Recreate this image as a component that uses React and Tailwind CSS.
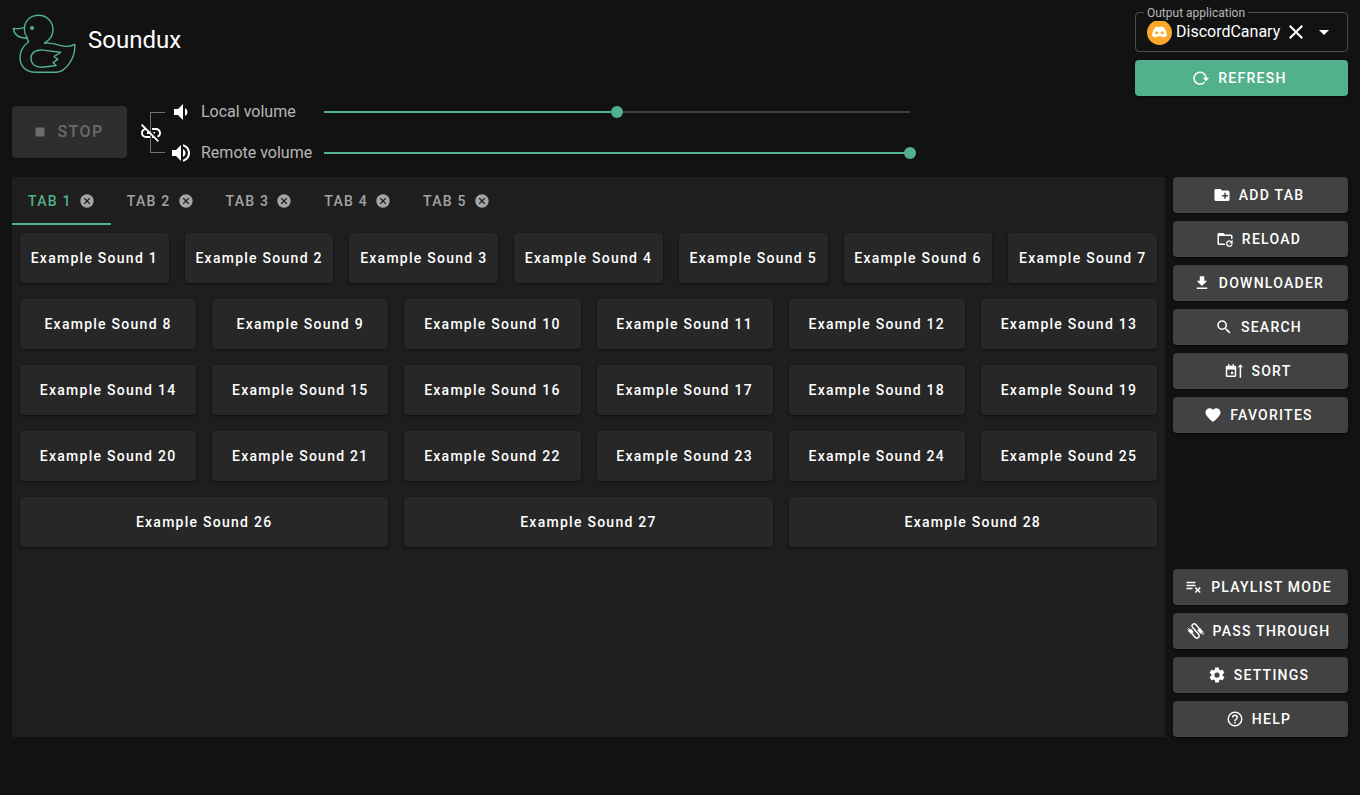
import { useState } from "react";

const icons = {
  stop: "M18,18H6V6H18V18Z",
  volumeMedium:
    "M5,9V15H9L14,20V4L9,9M18.5,12C18.5,10.23 17.5,8.71 16,7.97V16C17.5,15.29 18.5,13.76 18.5,12Z",
  volumeHigh:
    "M14,3.23V5.29C16.89,6.15 19,8.83 19,12C19,15.17 16.89,17.84 14,18.7V20.77C18,19.86 21,16.28 21,12C21,7.72 18,4.14 14,3.23M16.5,12C16.5,10.23 15.5,8.71 14,7.97V16C15.5,15.29 16.5,13.76 16.5,12M3,9V15H7L12,20V4L7,9H3Z",
  linkOff:
    "M17,7H13V8.9H17C18.71,8.9 20.1,10.29 20.1,12C20.1,13.43 19.12,14.63 17.79,15L19.25,16.44C20.88,15.61 22,13.95 22,12A5,5 0 0,0 17,7M16,11H13.81L15.81,13H16V11M2,4.27L5.11,7.38C3.29,8.12 2,9.91 2,12A5,5 0 0,0 7,17H11V15.1H7C5.29,15.1 3.9,13.71 3.9,12C3.9,10.41 5.11,9.1 6.66,8.93L8.73,11H8V13H10.73L13,15.27V17H14.73L18.74,21L20,19.74L3.27,3L2,4.27Z",
  close:
    "M19,6.41L17.59,5L12,10.59L6.41,5L5,6.41L10.59,12L5,17.59L6.41,19L12,13.41L17.59,19L19,17.59L13.41,12L19,6.41Z",
  closeCircle:
    "M12,2C17.53,2 22,6.47 22,12C22,17.53 17.53,22 12,22C6.47,22 2,17.53 2,12C2,6.47 6.47,2 12,2M15.59,7L12,10.59L8.41,7L7,8.41L10.59,12L7,15.59L8.41,17L12,13.41L15.59,17L17,15.59L13.41,12L17,8.41L15.59,7Z",
  menuDown: "M7,10L12,15L17,10H7Z",
  folderPlus:
    "M10,4L12,6H20A2,2 0 0,1 22,8V18A2,2 0 0,1 20,20H4C2.89,20 2,19.1 2,18V6C2,4.89 2.89,4 4,4H10M15,9V12H12V14H15V17H17V14H20V12H17V9H15Z",
  folderRefresh:
    "M12,18H4V8H20V12H22V8A2,2 0 0,0 20,6H12L10,4H4C2.89,4 2,4.89 2,6V18A2,2 0 0,0 4,20H12V18M18,13.5C19.1,13.5 20.2,13.95 20.9,14.7L22.3,13.3V18H17.6L19.7,15.9C19.3,15.5 18.7,15.2 18,15.2A2.8,2.8 0 1,0 20.6,19H22.4A4.5,4.5 0 1,1 18,13.5Z",
  download: "M5,20H19V18H5M19,9H15V3H9V9H5L12,16L19,9Z",
  magnify:
    "M9.5,3A6.5,6.5 0 0,1 16,9.5C16,11.11 15.41,12.59 14.44,13.73L14.71,14H15.5L20.5,19L19,20.5L14,15.5V14.71L13.73,14.44C12.59,15.41 11.11,16 9.5,16A6.5,6.5 0 0,1 3,9.5A6.5,6.5 0 0,1 9.5,3M9.5,5C7,5 5,7 5,9.5C5,12 7,14 9.5,14C12,14 14,12 14,9.5C14,7 12,5 9.5,5Z",
  sortCalendar:
    "M21.5,7H24L20.5,3L17,7H19.5V21H21.5M8,16H11V13H8M13,5H12V3H10V5H6V3H4V5H3C1.89,5 1,5.89 1,7V18C1,19.11 1.89,20 3,20H13C14.11,20 15,19.11 15,18V7C15,5.89 14.11,5 13,5M3,18V10H13V18Z",
  heart:
    "M12,21.35L10.55,20.03C5.4,15.36 2,12.27 2,8.5C2,5.41 4.42,3 7.5,3C9.24,3 10.91,3.81 12,5.08C13.09,3.81 14.76,3 16.5,3C19.58,3 22,5.41 22,8.5C22,12.27 18.6,15.36 13.45,20.03L12,21.35Z",
  playlistRemove:
    "M14,9H2V11H14V9M14,5H2V7H14V5M2,15H10V13H2V15M14.41,20L17,17.41L19.59,20L21,18.59L18.41,16L21,13.41L19.59,12L17,14.59L14.41,12L13,13.41L15.59,16L13,18.59L14.41,20Z",
  cog: "M12,15.5A3.5,3.5 0 0,1 8.5,12A3.5,3.5 0 0,1 12,8.5A3.5,3.5 0 0,1 15.5,12A3.5,3.5 0 0,1 12,15.5M19.43,12.97C19.47,12.65 19.5,12.33 19.5,12C19.5,11.67 19.47,11.34 19.43,11L21.54,9.37C21.73,9.22 21.78,8.95 21.66,8.73L19.66,5.27C19.54,5.05 19.27,4.96 19.05,5.05L16.56,6.05C16.04,5.66 15.5,5.32 14.87,5.07L14.5,2.42C14.46,2.18 14.25,2 14,2H10C9.75,2 9.54,2.18 9.5,2.42L9.13,5.07C8.5,5.32 7.96,5.66 7.44,6.05L4.95,5.05C4.73,4.96 4.46,5.05 4.34,5.27L2.34,8.73C2.21,8.95 2.27,9.22 2.46,9.37L4.57,11C4.53,11.34 4.5,11.67 4.5,12C4.5,12.33 4.53,12.65 4.57,12.97L2.46,14.63C2.27,14.78 2.21,15.05 2.34,15.27L4.34,18.73C4.46,18.95 4.73,19.03 4.95,18.95L7.44,17.94C7.96,18.34 8.5,18.68 9.13,18.93L9.5,21.58C9.54,21.82 9.75,22 10,22H14C14.25,22 14.46,21.82 14.5,21.58L14.87,18.93C15.5,18.67 16.04,18.34 16.56,17.94L19.05,18.95C19.27,19.03 19.54,18.95 19.66,18.73L21.66,15.27C21.78,15.05 21.73,14.78 21.54,14.63L19.43,12.97Z",
  helpCircle:
    "M11,18H13V16H11V18M12,2A10,10 0 0,0 2,12A10,10 0 0,0 12,22A10,10 0 0,0 22,12A10,10 0 0,0 12,2M12,20C7.59,20 4,16.41 4,12C4,7.59 7.59,4 12,4C16.41,4 20,7.59 20,12C20,16.41 16.41,20 12,20M12,6A4,4 0 0,0 8,10H10A2,2 0 0,1 12,8A2,2 0 0,1 14,10C14,12 11,11.75 11,15H13C13,12.75 16,12.5 16,10A4,4 0 0,0 12,6Z",
};

function Icon({ name, className = "size-[18px]" }) {
  return (
    <svg viewBox="0 0 24 24" fill="currentColor" aria-hidden="true" className={`shrink-0 ${className}`}>
      <path d={icons[name]} />
    </svg>
  );
}

function RefreshIcon() {
  return (
    <svg viewBox="0 0 24 24" fill="none" aria-hidden="true" className="size-[18px] shrink-0">
      <path d="M16.8 17.300A8 8 0 1 1 18.600 12.300" stroke="currentColor" strokeWidth="2" />
      <path d="M14.200 11.800H23L18.600 16.200Z" fill="currentColor" />
    </svg>
  );
}

function CablesIcon() {
  return (
    <svg viewBox="0 0 24 24" fill="none" stroke="currentColor" aria-hidden="true" className="size-[18px] shrink-0">
      <path
        d="M6 14.500 10.500 20C13.200 23.400 18.200 20 15.500 16.400L7.500 7.200C4.800 3.800 9.200 .6 12 3.800L17 9.800"
        strokeWidth="2"
      />
      <path d="M3.200 10.200 7 14.800M15.500 9.200 19.600 14.200" strokeWidth="4.500" />
      <path d="M.6 9.600 3 8M1.400 12 4 10M19 15.600 21.800 13.400M20.500 16.800 23 15" strokeWidth="1.300" />
    </svg>
  );
}

function DuckLogo() {
  return (
    <svg
      viewBox="0 0 64 64"
      fill="none"
      stroke="#53b08c"
      strokeWidth="1.4"
      strokeLinejoin="round"
      aria-hidden="true"
      className="size-16 shrink-0"
    >
      <path d="M12.500 15.400C13 8.400 19 3.300 26.600 3.300C34.800 3.300 41 9.600 41 17.600C41 23.200 38 28 32.400 31.200C39.800 30.600 43 31.800 48 33.400C53 35 57.800 34.800 62.800 32.500C63.200 40.100 61 46.300 57.200 51.700C53.200 57.300 49.200 60.300 44.400 60.300H23.200C13.600 60.300 8 54 8 45.600C8 39.600 11.200 34 16.600 29.800C16.400 28.400 15.400 27.400 14.800 26.200C7.600 26.200 2.200 23.200 1.300 16.400C5.300 17.100 8.800 16.900 12.500 15.400Z" />
      <path d="M12.500 15.400C12 19.600 12.900 23 15.800 26.200" />
      <path d="M48.700 40.300L30.600 38.100C23.600 37.500 19 40.900 19 46.200C19 52 23.200 55.400 30.200 55.200L44.200 53.500L41 50.600L45.800 47.400L42 44.500Z" />
      <circle cx="20" cy="16" r="2" fill="#53b08c" stroke="none" />
    </svg>
  );
}

function DiscordBadge() {
  return (
    <svg viewBox="0 0 25 25" aria-hidden="true" className="size-[25px] shrink-0">
      <circle cx="12.5" cy="12.5" r="12.5" fill="#f9a82b" />
      <path
        d="M8.200 7.400c1-.5 1.900-.8 2.900-.9l.4.800h2l.4-.8c1 .1 1.900.4 2.900.9 2.200 2.400 3.200 5.200 3 8.500-1.300.9-2.600 1.400-4.100 1.700l-.9-1.300h-4.600l-.9 1.300c-1.500-.3-2.800-.8-4.100-1.700-.2-3.300.8-6.100 3-8.500Z"
        fill="#fff"
      />
      <circle cx="9.8" cy="12.8" r="1.600" fill="#f9a82b" />
      <circle cx="15.200" cy="12.800" r="1.600" fill="#f9a82b" />
    </svg>
  );
}

function VolumeSlider({ id, label, icon, initial }) {
  const [value, setValue] = useState(initial);
  return (
    <div className="flex h-6 items-center">
      <Icon name={icon} className="size-6 text-white" />
      <label htmlFor={id} className="ml-2 w-[123px] shrink-0 text-base text-white/70">
        {label}
      </label>
      <div className="relative h-0.5 flex-1 bg-[#404040]">
        <div className="h-full bg-[#53b08c]" style={{ width: `${value}%` }} />
        <input
          id={id}
          type="range"
          min="0"
          max="100"
          value={value}
          onChange={(e) => setValue(Number(e.target.value))}
          className="absolute -top-[5px] -left-1.5 h-3 w-[calc(100%+12px)] cursor-pointer appearance-none bg-transparent [&::-webkit-slider-thumb]:size-3 [&::-webkit-slider-thumb]:appearance-none [&::-webkit-slider-thumb]:rounded-full [&::-webkit-slider-thumb]:bg-[#53b08c]"
        />
      </div>
    </div>
  );
}

function SideButton({ icon, children }) {
  return (
    <button className="flex h-9 items-center justify-center gap-2 rounded bg-[#424242] pr-4 pl-3 text-sm font-medium tracking-[0.09em] whitespace-nowrap text-white uppercase shadow-sm shadow-black/40">
      {typeof icon === "string" ? <Icon name={icon} /> : icon}
      {children}
    </button>
  );
}

const soundRows = [
  [1, 2, 3, 4, 5, 6, 7],
  [8, 9, 10, 11, 12, 13],
  [14, 15, 16, 17, 18, 19],
  [20, 21, 22, 23, 24, 25],
  [26, 27, 28],
];

export default function App() {
  const [activeTab, setActiveTab] = useState(1);

  return (
    <div className="flex min-h-screen flex-col bg-[#121212] px-3 pt-3 pb-[58px] font-['Roboto',sans-serif] text-white">
      <header className="flex items-start justify-between">
        <div className="flex items-start gap-3">
          <DuckLogo />
          <h1 className="mt-3 text-2xl">Soundux</h1>
        </div>
        <div className="flex w-[213px] flex-col gap-2">
          <div className="relative flex h-10 items-center rounded border border-white/25 pl-[11px]">
            <label
              htmlFor="output"
              className="absolute -top-2 left-2 bg-[#121212] px-[3px] text-xs leading-4 whitespace-nowrap text-white/70"
            >
              Output application
            </label>
            <DiscordBadge />
            <select
              id="output"
              className="ml-1 min-w-0 flex-1 appearance-none bg-transparent text-base text-white"
            >
              <option>DiscordCanary</option>
            </select>
            <button aria-label="Clear output application">
              <Icon name="close" className="size-6" />
            </button>
            <Icon name="menuDown" className="pointer-events-none mr-[11px] ml-1 size-6" />
          </div>
          <button className="flex h-9 items-center justify-center gap-2 rounded bg-[#53b08c] pr-4 pl-3 text-sm font-medium tracking-[0.09em] uppercase shadow-sm shadow-black/40">
            <RefreshIcon />
            Refresh
          </button>
        </div>
      </header>

      <section className="mt-1 flex w-[68%] items-start pr-2.5">
        <button
          disabled
          className="mt-1.5 flex h-[52px] w-[115px] shrink-0 items-center justify-center gap-2 rounded bg-[#2e2e2e] pr-1 text-base font-medium tracking-[0.09em] text-white/30 uppercase"
        >
          <Icon name="stop" />
          Stop
        </button>
        <div className="mt-3 ml-3 grid shrink-0 items-center">
          <div className="col-start-1 row-start-1 ml-[11px] h-[41px] w-[15px] border-y border-l border-white/40" />
          <button aria-label="Link volumes" className="col-start-1 row-start-1">
            <Icon name="linkOff" className="size-6" />
          </button>
        </div>
        <div className="ml-1 flex flex-1 flex-col gap-[17px]">
          <VolumeSlider id="local-volume" label="Local volume" icon="volumeMedium" initial={50} />
          <VolumeSlider id="remote-volume" label="Remote volume" icon="volumeHigh" initial={100} />
        </div>
      </section>

      <main className="mt-3 flex flex-1 gap-2">
        <section className="min-w-0 flex-1 bg-[#1e1e1e]">
          <nav className="flex h-12">
            {[1, 2, 3, 4, 5].map((tab) => (
              <div
                key={tab}
                className={`flex items-center gap-[7px] px-4 text-sm font-medium tracking-[0.09em] ${
                  tab === activeTab ? "text-[#53b08c] shadow-[inset_0_-2px_#53b08c]" : "text-white/60"
                }`}
              >
                <button onClick={() => setActiveTab(tab)} className="uppercase">
                  Tab {tab}
                </button>
                <button aria-label={`Close tab ${tab}`} className="text-[#a5a5a5]">
                  <Icon name="closeCircle" className="size-4" />
                </button>
              </div>
            ))}
          </nav>
          <div className="flex flex-col gap-4 p-2">
            {soundRows.map((row) => (
              <div key={row[0]} className="flex gap-4">
                {row.map((n) => (
                  <button
                    key={n}
                    className="h-[50px] min-w-0 flex-1 rounded bg-[#272727] text-sm font-medium tracking-[0.09em] whitespace-nowrap shadow-sm shadow-black/40"
                  >
                    Example Sound {n}
                  </button>
                ))}
              </div>
            ))}
          </div>
        </section>

        <aside className="flex w-[175px] shrink-0 flex-col gap-2">
          <SideButton icon="folderPlus">Add tab</SideButton>
          <SideButton icon="folderRefresh">Reload</SideButton>
          <SideButton icon="download">Downloader</SideButton>
          <SideButton icon="magnify">Search</SideButton>
          <SideButton icon="sortCalendar">Sort</SideButton>
          <SideButton icon="heart">Favorites</SideButton>
          <div className="flex-1" />
          <SideButton icon="playlistRemove">Playlist mode</SideButton>
          <SideButton icon={<CablesIcon />}>Pass through</SideButton>
          <SideButton icon="cog">Settings</SideButton>
          <SideButton icon="helpCircle">Help</SideButton>
        </aside>
      </main>
    </div>
  );
}
